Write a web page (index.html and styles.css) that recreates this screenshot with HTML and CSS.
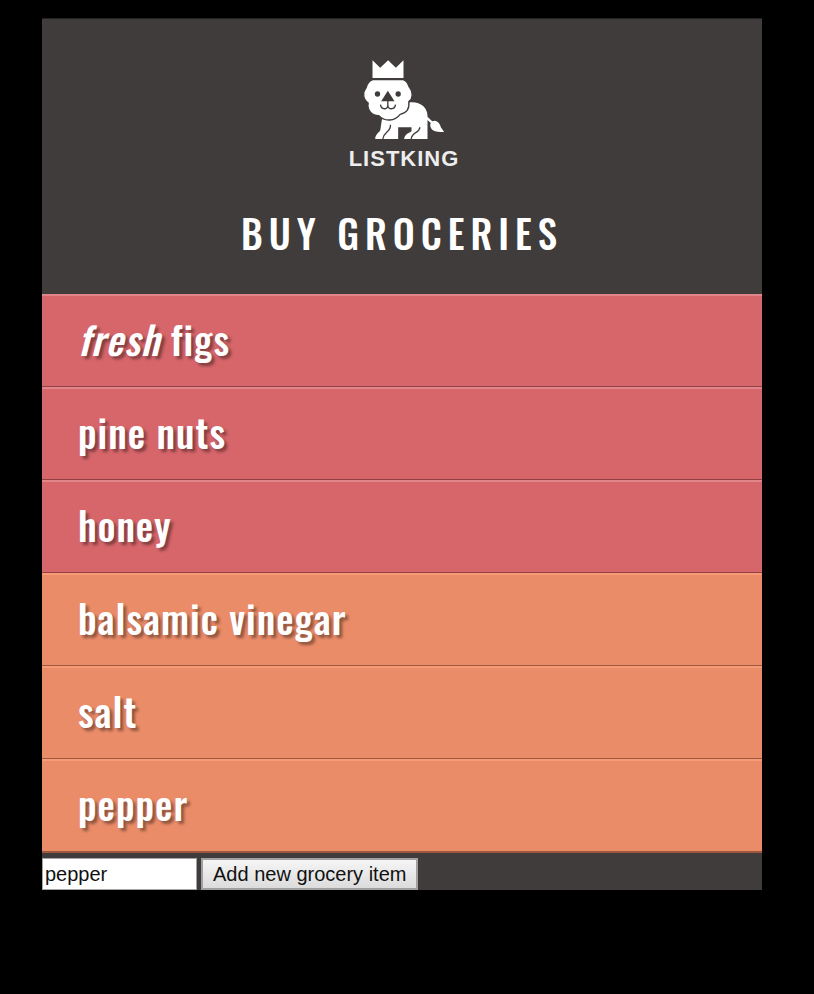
FILE: index.html
```html
<!DOCTYPE html>
<html lang="en">
<head>
<meta charset="utf-8">
<meta name="viewport" content="width=device-width, initial-scale=1">
<title>List King</title>
<link rel="stylesheet" href="styles.css">
</head>
<body>
<main class="page">
  <header class="header">
    <div class="logo">
      <svg class="lion" viewBox="60 24 260 246" aria-hidden="true">
        <g fill="#fff">
          <path d="M97 31 L120 53 L144 31 L167 53 L190 31 V84 H97 Z"/>
          <path d="M204 158 C236 152 262 170 262 198 V267 H192 C194 253 205 250 214 244 V232 H174 V267 H105 C106 254 113 249 120 242 L126 204 Z"/>
          <path d="M262 200 L276 214 C288 208 300 220 302 232 L312 246 C296 245 278 247 272 233 C269 225 270 222 272 219 L258 207 Z"/>
        </g>
        <path d="M98 89 H189 C203 93 204 106 208 112 C220 126 218 147 206 155 C209 180 195 190 180 193 C164 214 133 216 116 197 C96 197 80 182 84 159 C67 147 67 127 78 113 C81 100 86 93 98 89 Z" fill="#fff" stroke="#403c3b" stroke-width="4"/>
        <g fill="#403c3b">
          <circle cx="112" cy="132" r="8"/>
          <circle cx="174" cy="132" r="8"/>
          <path d="M143 122 L163 154 H123 Z"/>
        </g>
        <g fill="none" stroke="#403c3b" stroke-width="4">
          <path d="M143 152 V168 M121 164 C123 180 143 180 143 166 C143 180 164 180 166 164"/>
          <path d="M151 224 C152 248 131 243 128 267 M239 232 C239 250 216 244 213 267"/>
        </g>
      </svg>
      <span class="wordmark">LISTKING</span>
    </div>
    <h2 class="title">Buy groceries</h2>
  </header>
  <ul class="list">
    <li class="item hot"><em>fresh</em> figs</li>
    <li class="item hot">pine nuts</li>
    <li class="item hot">honey</li>
    <li class="item cool">balsamic vinegar</li>
    <li class="item cool">salt</li>
    <li class="item cool">pepper</li>
  </ul>
  <form class="add-form">
    <input class="add-input" type="text" value="pepper" aria-label="Grocery item">
    <button class="add-button" type="button">Add new grocery item</button>
  </form>
</main>
</body>
</html>
```
FILE: styles.css
```css
* {
  box-sizing: border-box;
}

body {
  margin: 0;
  background: #000;
  color: #fff;
  font-family: Oswald, "Liberation Sans", sans-serif;
}

.page {
  max-width: 720px;
  margin: 18px 52px 0 42px;
  background: #403c3b;
}

.header {
  display: flex;
  flex-direction: column;
  align-items: center;
  padding: 39px 0 30px;
  border-top: 1px solid #222;
}

.logo {
  display: flex;
  flex-direction: column;
  align-items: center;
  gap: 6px;
  padding-left: 4px;
}

.lion {
  width: 87px;
  height: 82px;
}

.wordmark {
  color: #eee;
  font: bold 22px/26px "Liberation Sans", sans-serif;
  letter-spacing: 1px;
}

.title {
  margin: 28px 0 0;
  font-size: 39px;
  font-weight: 500;
  line-height: 64px;
  letter-spacing: 6px;
  text-transform: uppercase;
}

.list {
  margin: 0;
  padding: 0;
  list-style: none;
}

.item {
  padding: 0 36px 6px;
  border-top: 2px solid;
  border-bottom: 1px solid;
  font-size: 39px;
  font-weight: 500;
  line-height: 84px;
  letter-spacing: 1px;
  text-shadow: 3px 3px 3px rgba(0, 0, 0, 0.4);
}

.item:last-child {
  border-bottom-width: 2px;
}

.hot {
  background: #d7666b;
  border-color: #e0858a transparent #914046;
}

.cool {
  background: #eb8c69;
  border-color: #f79a76 transparent #9d583f;
}

.add-form {
  display: flex;
  gap: 4px;
  padding-top: 5px;
}

.add-input,
.add-button {
  height: 32px;
  margin: 0;
  border-radius: 0;
  color: #111;
  font: 20px "Liberation Sans", sans-serif;
}

.add-input {
  width: 155px;
  padding: 0 2px;
  border: 1px solid #a5a5a5;
  background: #fff;
}

.add-button {
  padding: 0 10px;
  border: 2px solid #a0a0a0;
  background: linear-gradient(#f5f5f5, #dcdcdc);
}
```
